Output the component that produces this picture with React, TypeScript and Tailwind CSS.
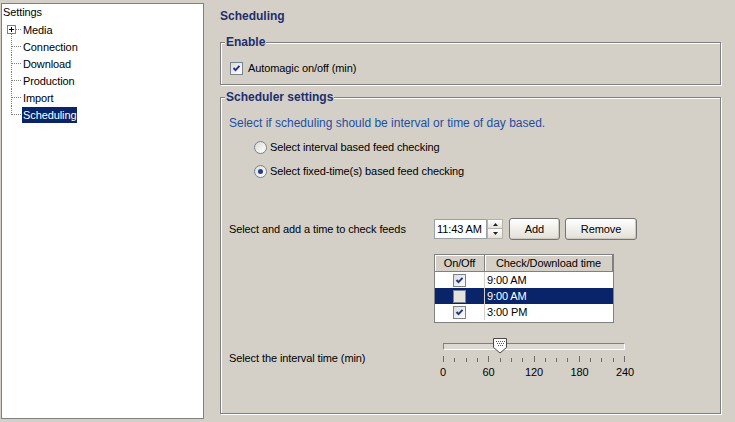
const treeItems = ["Media", "Connection", "Download", "Production", "Import", "Scheduling"];

const times = [
  { on: true, time: "9:00 AM" },
  { on: false, time: "9:00 AM", selected: true },
  { on: true, time: "3:00 PM" },
];

function Connector({ kind }: { kind: "plus" | "mid" | "last" }) {
  return (
    <svg width="20" height="17" className="shrink-0">
      {kind === "plus" ? (
        <>
          <rect x="5.5" y="4.5" width="8" height="8" fill="#fff" stroke="#808080" />
          <path d="M7 8.5H12M9.5 6V11" stroke="#000" />
          <path d="M9.5 13V17M14 8.5H20" stroke="#808080" strokeDasharray="1 1" />
        </>
      ) : (
        <path
          d={kind === "last" ? "M9.5 0V9M10 8.5H20" : "M9.5 0V17M10 8.5H20"}
          stroke="#808080"
          strokeDasharray="1 1"
        />
      )}
    </svg>
  );
}

function Check({ checked, dim }: { checked: boolean; dim?: boolean }) {
  return (
    <div
      className={`w-[13px] h-[13px] shrink-0 border border-[#7a8190] flex items-center justify-center ${
        dim ? "bg-[#e4e2dc]" : "bg-linear-to-br from-[#dcdcd4] to-white"
      }`}
    >
      {checked && (
        <svg width="11" height="11">
          <polyline points="2.5,5 4.5,7.2 8.5,2.8" fill="none" stroke="#21318f" strokeWidth="1.9" />
        </svg>
      )}
    </div>
  );
}

function Radio({ on }: { on?: boolean }) {
  return (
    <div className="w-[13px] h-[13px] shrink-0 rounded-full border border-[#7a8190] bg-linear-to-br from-[#dcdcd4] to-white flex items-center justify-center">
      {on && <div className="w-[5px] h-[5px] rounded-full bg-[#2a3a8c]" />}
    </div>
  );
}

function Button({ label, w }: { label: string; w: string }) {
  return (
    <div
      className={`${w} h-[22px] rounded-[3px] border border-[#747474] bg-linear-to-b from-white to-[#e2dfd6] shadow-[inset_-1px_-1px_0_#cbc8bf] flex items-center justify-center`}
    >
      {label}
    </div>
  );
}

function Slider() {
  const ticks = Array.from({ length: 17 }, (_, i) => i);
  return (
    <div className="w-[182px]">
      <div className="relative h-[16px] pt-[6px]">
        <div className="h-[7px] border-t border-l border-[#808080] border-b-white border-r-white border-b border-r bg-[#dcd9d2]" />
        <svg width="15" height="16" className="absolute left-[50px] top-[1px]">
          <polygon points="0.5,0.5 13.5,0.5 13.5,9.5 7,15 0.5,9.5" fill="#fbfbfb" stroke="#4a4a4a" />
          {[3, 5, 7, 9, 11].map((x) => (
            <rect key={"a" + x} x={x} y="3" width="1" height="1" fill="#555" />
          ))}
          {[4, 6, 8, 10].map((x) => (
            <rect key={"b" + x} x={x} y="5" width="1" height="1" fill="#555" />
          ))}
          {[5, 7, 9].map((x) => (
            <rect key={"c" + x} x={x} y="7" width="1" height="1" fill="#555" />
          ))}
        </svg>
      </div>
      <div className="mt-[3px] h-[6px] flex justify-between items-end">
        {ticks.map((i) => (
          <div key={i} className={`w-px bg-[#6a6a6a] ${i % 4 === 0 ? "h-[6px]" : "h-[4px]"}`} />
        ))}
      </div>
      <div className="mt-[4px] -ml-[15px] w-[212px] flex justify-between leading-[13px]">
        {["0", "60", "120", "180", "240"].map((l) => (
          <div key={l} className="w-[30px] text-center">
            {l}
          </div>
        ))}
      </div>
    </div>
  );
}

export default function App() {
  return (
    <div className="w-[735px] h-[422px] bg-[#d4d0c8] flex overflow-hidden font-['Liberation_Sans',Arial,sans-serif] text-[11px] tracking-[-0.1px] text-black">
      {/* tree */}
      <div className="ml-px mt-[3px] w-[203px] h-[416px] shrink-0 bg-white border border-[#808080]">
        <div className="h-[17px] flex items-center pl-px">Settings</div>
        {treeItems.map((item, i) => (
          <div key={item} className="h-[17px] flex items-center">
            <Connector kind={i === 0 ? "plus" : i === treeItems.length - 1 ? "last" : "mid"} />
            <span
              className={`px-px leading-[16px] ${
                item === "Scheduling" ? "bg-[#0a246a] text-white" : ""
              }`}
            >
              {item}
            </span>
          </div>
        ))}
      </div>

      {/* settings page */}
      <div className="ml-[16px] w-[501px] shrink-0 pt-[9px]">
        <div className="h-[15px] leading-[15px] text-[12px] tracking-normal font-bold text-[#1f2d6e]">Scheduling</div>

        <div className="mt-[18px] border border-[#808080] shadow-[1px_1px_0_#fff,inset_1px_1px_0_#fff] pl-[9px] pb-[9px]">
          <div className="-mt-[8px] -ml-[5px] w-fit px-px bg-[#d4d0c8] text-[12px] tracking-normal font-bold leading-[15px] text-[#1f2d6e]">
            Enable
          </div>
          <div className="mt-[12px] h-[13px] flex items-center gap-[5px]">
            <Check checked />
            <span>Automagic on/off (min)</span>
          </div>
        </div>

        <div className="mt-[12px] h-[317px] border border-[#808080] shadow-[1px_1px_0_#fff,inset_1px_1px_0_#fff] pl-[8px]">
          <div className="-mt-[8px] -ml-[4px] w-fit px-px bg-[#d4d0c8] text-[12px] tracking-normal font-bold leading-[15px] text-[#1f2d6e]">
            Scheduler settings
          </div>
          <div className="mt-[11px] text-[12px] tracking-normal leading-[15px] text-[#1f4e9e]">
            Select if scheduling should be interval or time of day based.
          </div>
          <div className="mt-[10px] ml-[25px] h-[13px] flex items-center gap-[3px]">
            <Radio />
            <span>Select interval based feed checking</span>
          </div>
          <div className="mt-[11px] ml-[25px] h-[13px] flex items-center gap-[3px]">
            <Radio on />
            <span>Select fixed-time(s) based feed checking</span>
          </div>

          <div className="mt-[40px] h-[22px] flex items-center">
            <div className="w-[205px]">Select and add a time to check feeds</div>
            <div className="w-[53px] h-[20px] border border-[#9aa0a8] bg-white pl-[2px] flex items-center">11:43 AM</div>
            <div className="w-[16px] h-[20px] flex flex-col">
              <div className="h-[10px] border border-[#b4b2ab] bg-linear-to-b from-white to-[#e4e1d9] flex items-center justify-center">
                <svg width="5" height="3">
                  <path d="M2.5 0L5 3H0Z" fill="#222" />
                </svg>
              </div>
              <div className="h-[10px] border border-t-0 border-[#b4b2ab] bg-linear-to-b from-white to-[#e4e1d9] flex items-center justify-center">
                <svg width="5" height="3">
                  <path d="M0 0H5L2.5 3Z" fill="#222" />
                </svg>
              </div>
            </div>
            <div className="ml-[6px]">
              <Button label="Add" w="w-[51px]" />
            </div>
            <div className="ml-[5px]">
              <Button label="Remove" w="w-[72px]" />
            </div>
          </div>

          <div className="ml-[205px] mt-[14px] w-[180px] h-[69px] border border-[#808080] bg-white">
            <div className="h-[17px] flex bg-[#d4d0c8]">
              <div className="w-[50px] border-r border-b border-[#808080] shadow-[inset_1px_1px_0_#fff] flex items-center justify-center">
                On/Off
              </div>
              <div className="flex-1 border-r border-b border-[#808080] shadow-[inset_1px_1px_0_#fff] flex items-center justify-center">
                Check/Download time
              </div>
            </div>
            {times.map((t, i) => (
              <div
                key={i}
                className={`h-[16px] flex ${t.selected ? "bg-[#0a246a] text-white" : ""}`}
              >
                <div className="w-[50px] border-r border-[#d4d0c8] flex items-center justify-center">
                  <Check checked={t.on} dim={t.selected} />
                </div>
                <div className="pl-[2px] flex items-center">{t.time}</div>
              </div>
            ))}
          </div>

          <div className="mt-[14px] flex items-start">
            <div className="w-[205px] mt-[15px] leading-[13px]">Select the interval time (min)</div>
            <div className="pl-[9px]">
              <Slider />
            </div>
          </div>
        </div>
      </div>
    </div>
  );
}
